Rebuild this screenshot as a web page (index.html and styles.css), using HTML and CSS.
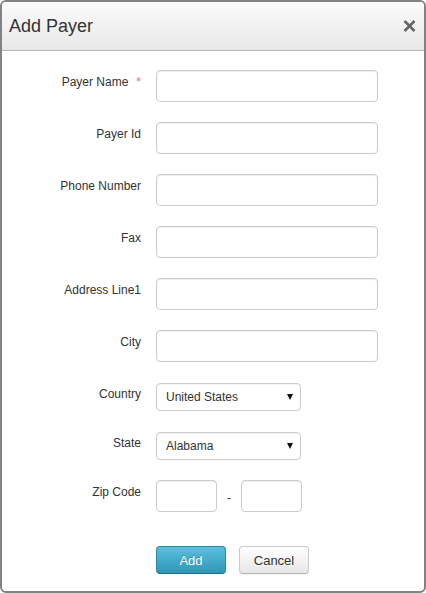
FILE: index.html
```html
<!DOCTYPE html>
<html>
<head>
<meta charset="utf-8">
<link rel="stylesheet" href="styles.css">
</head>
<body>
<div class="modal">
  <div class="modal-header">
    <h3 class="modal-title">Add Payer</h3>
    <button class="close" type="button" aria-label="Close">
      <svg width="13" height="12" viewBox="0 0 13 12"><path d="M1.5 1 L11.5 11 M11.5 1 L1.5 11" stroke="#666" stroke-width="2.6" stroke-linecap="butt" fill="none"/></svg>
    </button>
  </div>
  <form class="modal-body">
    <div class="row">
      <label class="label">Payer Name<span class="req">*</span></label>
      <input class="field" type="text">
    </div>
    <div class="row">
      <label class="label">Payer Id</label>
      <input class="field" type="text">
    </div>
    <div class="row">
      <label class="label">Phone Number</label>
      <input class="field" type="text">
    </div>
    <div class="row">
      <label class="label">Fax</label>
      <input class="field" type="text">
    </div>
    <div class="row">
      <label class="label">Address Line1</label>
      <input class="field" type="text">
    </div>
    <div class="row">
      <label class="label">City</label>
      <input class="field" type="text">
    </div>
    <div class="row row-select">
      <label class="label">Country</label>
      <div class="select-wrap">
        <select class="select"><option>United States</option></select>
        <span class="caret"></span>
      </div>
    </div>
    <div class="row row-select">
      <label class="label">State</label>
      <div class="select-wrap">
        <select class="select"><option>Alabama</option></select>
        <span class="caret"></span>
      </div>
    </div>
    <div class="row">
      <label class="label">Zip Code</label>
      <div class="zip">
        <input class="field zip-field" type="text">
        <span class="dash">-</span>
        <input class="field zip-field" type="text">
      </div>
    </div>
    <div class="row actions">
      <span></span>
      <div class="buttons">
        <button type="button" class="btn btn-info">Add</button>
        <button type="button" class="btn btn-default">Cancel</button>
      </div>
    </div>
  </form>
</div>
</body>
</html>
```

FILE: styles.css
```css
html, body {
  margin: 0;
  padding: 0;
  background: #fff;
}
body {
  font-family: "Liberation Sans", Arial, sans-serif;
  color: #333;
}
.modal {
  width: 426px;
  height: 593px;
  box-sizing: border-box;
  border: 2px solid #828282;
  border-radius: 6px;
  overflow: hidden;
  background: #fff;
}
.modal-header {
  height: 49px;
  box-sizing: border-box;
  padding: 0 8px 0 7px;
  display: flex;
  align-items: center;
  justify-content: space-between;
  background: linear-gradient(to bottom, #fbfbfb, #e8e8e8);
  border-bottom: 1px solid #b4b4b4;
}
.modal-title {
  margin: 0;
  font-size: 18px;
  line-height: 20px;
  font-weight: normal;
  color: #333;
}
.close {
  border: 0;
  background: none;
  padding: 0;
  margin: 0;
  width: 13px;
  height: 12px;
  display: block;
}
.close svg { display: block; }
.modal-body {
  margin: 0;
  padding-top: 19px;
  display: flex;
  flex-direction: column;
  gap: 20px;
}
.row {
  display: grid;
  grid-template-columns: 139px auto;
  column-gap: 15px;
  align-items: start;
}
.label {
  font-size: 12px;
  line-height: 17px;
  padding-top: 4px;
  text-align: right;
  color: #333;
}
.req {
  color: #f07070;
  margin-left: 8px;
}
.field {
  box-sizing: border-box;
  width: 222px;
  height: 32px;
  margin: 0;
  border: 1px solid #ccc;
  border-radius: 4px;
  box-shadow: inset 0 1px 1px rgba(0,0,0,0.075);
  background: #fff;
  font-family: inherit;
  font-size: 12px;
  padding: 0 10px;
}
.row-select {
  height: 29px;
}
.select-wrap {
  position: relative;
  width: 145px;
  height: 28px;
  margin-top: 1px;
}
.select {
  appearance: none;
  -webkit-appearance: none;
  box-sizing: border-box;
  width: 145px;
  height: 28px;
  margin: 0;
  border: 1px solid #ccc;
  border-radius: 4px;
  background: #fff;
  font-family: inherit;
  font-size: 12px;
  color: #333;
  padding: 0 0 0 9px;
  box-shadow: inset 0 1px 1px rgba(0,0,0,0.05);
}
.caret {
  position: absolute;
  left: 131px;
  top: 11px;
  width: 0;
  height: 0;
  border-left: 3px solid transparent;
  border-right: 3px solid transparent;
  border-top: 6px solid #111;
  pointer-events: none;
}
.zip {
  display: flex;
  align-items: center;
}
.zip-field {
  width: 61px;
}
.dash {
  width: 24px;
  text-align: center;
  font-size: 12px;
  line-height: 32px;
  height: 32px;
  padding-top: 2px;
  box-sizing: border-box;
}
.actions {
  margin-top: 14px;
}
.buttons {
  display: flex;
  gap: 13px;
}
.btn {
  box-sizing: border-box;
  width: 70px;
  height: 28px;
  margin: 0;
  padding: 0;
  font-family: inherit;
  font-size: 13px;
  border-radius: 4px;
  cursor: pointer;
}
.btn-info {
  color: #fff;
  text-shadow: 0 -1px 0 rgba(0,0,0,0.25);
  background: linear-gradient(to bottom, #5bc0de, #2f96b4);
  border: 1px solid #2a89a6;
  border-bottom-color: #1f6f88;
}
.btn-default {
  color: #333;
  text-shadow: 0 1px 1px rgba(255,255,255,0.75);
  background: linear-gradient(to bottom, #ffffff, #e6e6e6);
  border: 1px solid #cccccc;
  border-bottom-color: #b3b3b3;
  box-shadow: 0 1px 2px rgba(0,0,0,0.05);
}
```
